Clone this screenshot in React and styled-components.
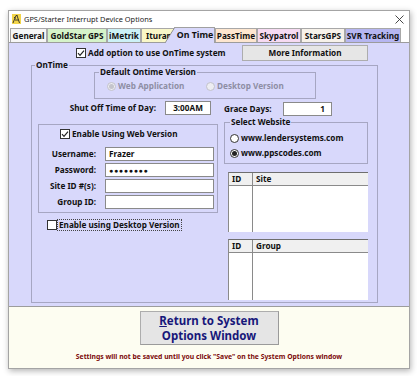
import React from "react";
import styled, { createGlobalStyle } from "styled-components";

const FONT = `"Noto Sans", "Open Sans", sans-serif`;
const LAV = "#d8d8fb";
const FS = "8.2px";
const GROUP_BORDER = "#a6a6c2";

const Global = createGlobalStyle`
  html, body { margin: 0; padding: 0; background: #ffffff; }
  #root {
    box-sizing: border-box;
    width: 417px;
    height: 376px;
    padding: 10px 0 0 8px;
    overflow: hidden;
  }
`;

const Window = styled.div`
  box-sizing: border-box;
  width: 402px;
  height: 359px;
  border: 1px solid #a4a4a4;
  background: #ffffff;
  box-shadow: 1px 2px 6px rgba(0, 0, 0, 0.3);
  display: flex;
  flex-direction: column;
  font-family: ${FONT};
  color: #111;
`;

const TitleBar = styled.div`
  height: 16px;
  display: flex;
  align-items: center;
  padding-left: 3px;
`;

const TitleText = styled.span`
  margin-left: 3px;
  font-size: 7.4px;
  color: #1b1b1b;
  white-space: nowrap;
`;

const CloseBox = styled.div`
  margin-left: auto;
  margin-right: 5px;
  width: 9px;
  height: 9px;
  display: flex;
`;

const TabStrip = styled.div`
  height: 15px;
  display: flex;
  align-items: flex-end;
  padding-left: 1px;
`;

const Tab = styled.div`
  box-sizing: border-box;
  width: ${(p) => p.$w}px;
  height: 14px;
  border: 1px solid #a8a8a8;
  border-bottom: none;
  background: ${(p) => p.$bg};
  font: bold ${FS}/13px ${FONT};
  text-align: center;
  white-space: nowrap;
  overflow: hidden;
  color: #111;
`;

const ActiveTab = styled.div`
  position: relative;
  z-index: 1;
  box-sizing: border-box;
  width: ${(p) => p.$w}px;
  height: 16px;
  margin-left: -12px;
  margin-bottom: -1px;
  padding-left: 11px;
  border-right: 1px solid #a0a0a0;
  background:
    linear-gradient(to bottom right, transparent calc(50% - 0.8px), #8c8c8c 50%, transparent calc(50% + 0.8px)) 0 0 / 10px 100% no-repeat,
    linear-gradient(#a0a0a0, #a0a0a0) 10px 0 / calc(100% - 10px) 1px no-repeat,
    linear-gradient(to bottom right, transparent 50%, ${LAV} 50%) 0 0 / 10px 100% no-repeat,
    linear-gradient(${LAV}, ${LAV}) 10px 0 / calc(100% - 10px) 100% no-repeat;
  font: bold 8.8px/16px ${FONT};
  text-align: center;
  white-space: nowrap;
  color: #111;
`;

const Panel = styled.div`
  box-sizing: border-box;
  height: 265px;
  border-top: 1px solid #9c9c9c;
  border-bottom: 1px solid #9c9c9c;
  background: ${LAV};
  display: flex;
  flex-direction: column;
`;

const TopRow = styled.div`
  height: 16px;
  margin-top: 2px;
  display: flex;
  align-items: center;
  padding-left: 67px;
`;

const CheckLabel = styled.label`
  display: flex;
  align-items: center;
  gap: 2px;
  font: bold ${FS}/12px ${FONT};
  white-space: nowrap;
  color: #111;
`;

const BoxMark = styled.span`
  box-sizing: border-box;
  width: 10px;
  height: 10px;
  flex: 0 0 10px;
  border: 1px solid #333;
  background: #fff;
  display: flex;
  align-items: center;
  justify-content: center;
`;

const InfoButton = styled.div`
  box-sizing: border-box;
  margin-left: auto;
  margin-right: 41px;
  width: 126px;
  height: 16px;
  border: 1px solid #adadad;
  background: #e6e6e6;
  font: bold ${FS}/14px ${FONT};
  text-align: center;
  color: #111;
`;

const Group = styled.fieldset`
  box-sizing: border-box;
  min-width: 0;
  padding: 0;
  border: 1px solid ${GROUP_BORDER};
`;

const Legend = styled.legend`
  padding: 0 1px;
  margin-left: ${(p) => p.$ml}px;
  font: bold ${FS}/12px ${FONT};
  color: #111;
`;

const OnTimeGroup = styled(Group)`
  width: 347px;
  height: 244px;
  margin: -2px 0 0 22px;
`;

const VersionGroup = styled(Group)`
  width: 222px;
  height: 33px;
  margin: -5px 0 0 62px;
`;

const VersionRow = styled.div`
  height: 14px;
  margin-top: 1px;
  padding-left: 12px;
  display: grid;
  grid-template-columns: 99px auto;
  align-items: center;
`;

const RadioLabel = styled.label`
  display: flex;
  align-items: center;
  gap: 2px;
  font: bold ${FS}/12px ${FONT};
  white-space: nowrap;
  color: ${(p) => (p.$disabled ? "#8e8ea4" : "#111")};
`;

const RadioMark = styled.span`
  box-sizing: border-box;
  width: 9px;
  height: 9px;
  flex: 0 0 9px;
  border-radius: 50%;
  border: 1px solid ${(p) => (p.$disabled ? "#c2c2cc" : "#333")};
  background: ${(p) => (p.$disabled ? "#ededf2" : "#fff")};
  display: flex;
  align-items: center;
  justify-content: center;
  &::after {
    content: "";
    display: ${(p) => (p.$checked ? "block" : "none")};
    width: 5px;
    height: 5px;
    border-radius: 50%;
    background: ${(p) => (p.$disabled ? "#c4c4cc" : "#222")};
  }
`;

const Columns = styled.div`
  display: flex;
  padding-left: 6px;
`;

const LeftCol = styled.div`
  width: 180px;
  display: flex;
  flex-direction: column;
`;

const RightCol = styled.div`
  width: 145px;
  margin-left: 6px;
  display: flex;
  flex-direction: column;
`;

const ShutRow = styled.div`
  height: 14px;
  margin-top: 2px;
  padding-right: 7px;
  display: flex;
  align-items: center;
  justify-content: flex-end;
`;

const FieldLabel = styled.span`
  font: bold ${FS}/12px ${FONT};
  white-space: nowrap;
  color: #111;
  text-align: ${(p) => p.$align || "right"};
`;

const TextBox = styled.div`
  box-sizing: border-box;
  height: 14px;
  width: ${(p) => p.$w}px;
  border: 1px solid #8a8a8a;
  background: #fff;
  font: bold ${FS}/12px ${FONT};
  color: #111;
  white-space: nowrap;
  overflow: hidden;
  text-align: ${(p) => p.$align || "left"};
  padding: 0 ${(p) => p.$pr || 3}px 0 3px;
`;

const TimeBox = styled(TextBox)`
  margin-left: 9px;
`;

const PasswordDots = styled.span`
  font: bold 7px/12px ${FONT};
  letter-spacing: 0.7px;
`;

const WebBox = styled.div`
  box-sizing: border-box;
  height: 89px;
  margin-top: 9px;
  border: 1px solid ${GROUP_BORDER};
  display: flex;
  flex-direction: column;
`;

const WebCheckRow = styled.div`
  height: 12px;
  margin-top: 3px;
  padding-left: 21px;
  display: flex;
`;

const FormGrid = styled.div`
  margin-top: 7px;
  display: grid;
  grid-template-columns: 57px 109px;
  column-gap: 9px;
  row-gap: 2px;
  align-items: center;
`;

const DesktopRow = styled.div`
  height: 12px;
  margin-top: 6px;
  padding-left: 9px;
  display: flex;
  align-items: center;
`;

const FocusText = styled.span`
  border: 1px dotted #444;
  padding: 0 1px;
  font: bold ${FS}/10px ${FONT};
  white-space: nowrap;
  color: #111;
`;

const GraceRow = styled.div`
  height: 14px;
  margin-top: 3px;
  display: grid;
  grid-template-columns: 59px 49px;
  align-items: center;
`;

const WebsiteGroup = styled(Group)`
  width: 144px;
  height: 48px;
  margin: 0;
`;

const WebsiteRows = styled.div`
  margin-top: 4px;
  padding-left: 5px;
  display: flex;
  flex-direction: column;
  gap: 3px;
`;

const RadioRow = styled.div`
  height: 12px;
  display: flex;
  align-items: center;
`;

const ListTable = styled.div`
  box-sizing: border-box;
  width: 140px;
  height: ${(p) => p.$h}px;
  margin: ${(p) => p.$mt}px 0 0 4px;
  border-top: 1px solid #6e6e6e;
  border-left: 1px solid #8a8a8a;
  background: #fff;
  display: grid;
  grid-template-columns: 24px 1fr;
  grid-template-rows: 13px 1fr;
`;

const HeadCell = styled.div`
  background: #f0f0f0;
  border-bottom: 1px solid #8a8a8a;
  border-right: ${(p) => (p.$divider ? "1px solid #8a8a8a" : "none")};
  font: bold ${FS}/12px ${FONT};
  padding-left: 3px;
  color: #111;
`;

const BodyCell = styled.div`
  border-right: ${(p) => (p.$divider ? "1px solid #8a8a8a" : "none")};
`;

const Footer = styled.div`
  flex: 1;
  background: #fdfdf1;
  display: flex;
  flex-direction: column;
  align-items: center;
`;

const ReturnButton = styled.div`
  box-sizing: border-box;
  width: 139px;
  height: 34px;
  margin-top: 4px;
  border: 1px solid #adadad;
  border-right-color: #9a9a9a;
  border-bottom-color: #9a9a9a;
  background: #e5e5e5;
  font: bold 11.5px/15px ${FONT};
  color: #17177a;
  text-align: center;
  padding-top: 1px;
`;

const Warning = styled.div`
  margin-top: 7px;
  font: bold 6.8px/10px ${FONT};
  color: #7c0a0a;
  white-space: nowrap;
`;

function CheckBox({ checked }) {
  return (
    <BoxMark>
      {checked && (
        <svg width="8" height="8" viewBox="0 0 8 8">
          <path d="M1 4.2 L3 6.3 L7 1.6" fill="none" stroke="#222" strokeWidth="1.2" />
        </svg>
      )}
    </BoxMark>
  );
}

function Radio({ checked, disabled, children }) {
  return (
    <RadioLabel $disabled={disabled}>
      <RadioMark $checked={checked} $disabled={disabled} />
      {children}
    </RadioLabel>
  );
}

function AppIcon() {
  return (
    <svg width="9" height="10" viewBox="0 0 9 10">
      <rect x="0" y="0" width="9" height="10" fill="#f2d54a" />
      <path d="M1 9 L4 1.5 L5.5 1.5 M3 6 L6.5 6 M5 1.5 L7.5 9 M2 3 L3.5 4.5" fill="none" stroke="#2a2a2a" strokeWidth="0.9" />
    </svg>
  );
}

const tabs = [
  { label: "General", w: 37, bg: "#f6f6f6" },
  { label: "GoldStar GPS", w: 60, bg: "#d5f3c9" },
  { label: "iMetrik", w: 34, bg: "#ccf1f6" },
  { label: "Ituran", w: 36, bg: "#f9f7c8" },
  { label: "On Time", w: 50, active: true },
  { label: "PassTime", w: 42, bg: "#fde6cf" },
  { label: "Skypatrol", w: 44, bg: "#f6daf2" },
  { label: "StarsGPS", w: 44, bg: "#f7f2ea" },
  { label: "SVR Tracking", w: 56, bg: "#b6b6f1" },
];

export default function App() {
  return (
    <>
      <Global />
      <Window>
        <TitleBar>
          <AppIcon />
          <TitleText>GPS/Starter Interrupt Device Options</TitleText>
          <CloseBox>
            <svg width="9" height="9" viewBox="0 0 9 9">
              <path d="M0.5 0.5 L8.5 8.5 M8.5 0.5 L0.5 8.5" stroke="#333" strokeWidth="0.9" />
            </svg>
          </CloseBox>
        </TitleBar>
        <TabStrip>
          {tabs.map((t) =>
            t.active ? (
              <ActiveTab key={t.label} $w={t.w}>{t.label}</ActiveTab>
            ) : (
              <Tab key={t.label} $w={t.w} $bg={t.bg}>{t.label}</Tab>
            )
          )}
        </TabStrip>
        <Panel>
          <TopRow>
            <CheckLabel>
              <CheckBox checked />
              Add option to use OnTime system
            </CheckLabel>
            <InfoButton>More Information</InfoButton>
          </TopRow>
          <OnTimeGroup>
            <Legend $ml={3}>OnTime</Legend>
            <VersionGroup>
              <Legend $ml={4}>Default Ontime Version</Legend>
              <VersionRow>
                <Radio checked disabled>Web Application</Radio>
                <Radio disabled>Desktop Version</Radio>
              </VersionRow>
            </VersionGroup>
            <Columns>
              <LeftCol>
                <ShutRow>
                  <FieldLabel>Shut Off Time of Day:</FieldLabel>
                  <TimeBox $w={46} $align="center">3:00AM</TimeBox>
                </ShutRow>
                <WebBox>
                  <WebCheckRow>
                    <CheckLabel>
                      <CheckBox checked />
                      Enable Using Web Version
                    </CheckLabel>
                  </WebCheckRow>
                  <FormGrid>
                    <FieldLabel>Username:</FieldLabel>
                    <TextBox $w={109}>Frazer</TextBox>
                    <FieldLabel>Password:</FieldLabel>
                    <TextBox $w={109}><PasswordDots>●●●●●●●●</PasswordDots></TextBox>
                    <FieldLabel>Site ID #(s):</FieldLabel>
                    <TextBox $w={109} />
                    <FieldLabel>Group ID:</FieldLabel>
                    <TextBox $w={109} />
                  </FormGrid>
                </WebBox>
                <DesktopRow>
                  <CheckBox />
                  <FocusText>Enable using Desktop Version</FocusText>
                </DesktopRow>
              </LeftCol>
              <RightCol>
                <GraceRow>
                  <FieldLabel $align="left">Grace Days:</FieldLabel>
                  <TextBox $w={49} $align="right" $pr={6}>1</TextBox>
                </GraceRow>
                <WebsiteGroup>
                  <Legend $ml={5}>Select Website</Legend>
                  <WebsiteRows>
                    <RadioRow><Radio>www.lendersystems.com</Radio></RadioRow>
                    <RadioRow><Radio checked>www.ppscodes.com</Radio></RadioRow>
                  </WebsiteRows>
                </WebsiteGroup>
                <ListTable $h={60} $mt={8}>
                  <HeadCell $divider>ID</HeadCell>
                  <HeadCell>Site</HeadCell>
                  <BodyCell $divider />
                  <BodyCell />
                </ListTable>
                <ListTable $h={61} $mt={7}>
                  <HeadCell $divider>ID</HeadCell>
                  <HeadCell>Group</HeadCell>
                  <BodyCell $divider />
                  <BodyCell />
                </ListTable>
              </RightCol>
            </Columns>
          </OnTimeGroup>
        </Panel>
        <Footer>
          <ReturnButton>
            <u>R</u>eturn to System
            <br />
            Options Window
          </ReturnButton>
          <Warning>Settings will not be saved until you click "Save" on the System Options window</Warning>
        </Footer>
      </Window>
    </>
  );
}
